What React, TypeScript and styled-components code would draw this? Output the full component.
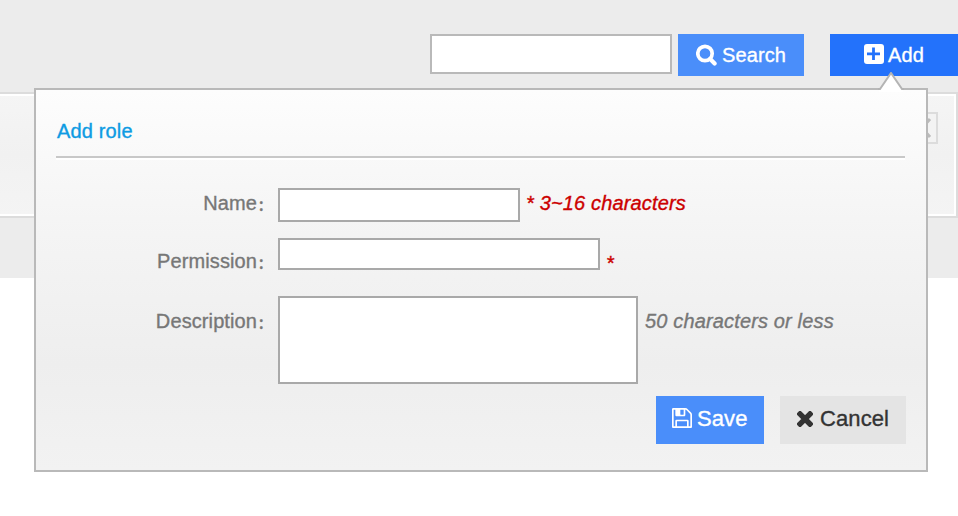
import React from 'react';
import styled, { createGlobalStyle } from 'styled-components';

const GlobalStyle = createGlobalStyle`
  * { box-sizing: border-box; }
  body {
    margin: 0;
    background: #fff;
    overflow: hidden;
    font-family: "Liberation Sans", Arial, "Noto Sans CJK SC", sans-serif;
    font-size: 20px;
    line-height: 24px;
    color: #777;
    -webkit-text-stroke: 0.35px currentColor;
  }
`;

const Page = styled.div`
  position: relative;
  width: 958px;
  height: 516px;
  overflow: hidden;
`;

const Backdrop = styled.div`
  height: 278px;
  background: #ececec;
`;

const Toolbar = styled.div`
  display: flex;
  align-items: flex-start;
  height: 92px;
  padding: 34px 0 0 430px;
`;

const SearchInput = styled.input`
  width: 242px;
  height: 40px;
  padding: 0 6px;
  border: 2px solid #b9b9b9;
  border-radius: 0;
  background: #fff;
  outline: none;
`;

const Button = styled.button<{ $bg: string; $color?: string; $w: number; $h?: number; $size?: number; $gap?: number }>`
  display: flex;
  flex: none;
  align-items: flex-start;
  gap: ${p => p.$gap ?? 5}px;
  width: ${p => p.$w}px;
  height: ${p => p.$h ?? 42}px;
  border: 0;
  background: ${p => p.$bg};
  color: ${p => p.$color ?? '#fff'};
  font: ${p => p.$size ?? 20}px/24px "Liberation Sans", Arial, sans-serif;
  letter-spacing: 0.1px;
`;

const SearchButton = styled(Button)`
  margin-left: 6px;
  padding: 9px 0 0 18px;
`;

const AddButton = styled(Button)`
  margin-left: 26px;
  padding: 9px 0 0 34px;
`;

const SaveButton = styled(Button)`
  padding: 11px 0 0 16px;
`;

const CancelButton = styled(Button)`
  padding: 11px 0 0 17px;
`;

const Icon = styled.svg<{ $top?: number }>`
  display: block;
  flex: none;
  margin-top: ${p => p.$top ?? 0}px;
`;

const FilterPanel = styled.div`
  display: flex;
  justify-content: flex-end;
  height: 126px;
  border: 2px solid #dcdcdc;
  border-left: 0;
  background: linear-gradient(#f5f5f5, #f1f1f1 50%, #f4f4f4);
  box-shadow: inset 0 2px #fff, inset 0 -2px #fff, inset -2px 0 #fff;
  padding: 18px 18px 0 0;
`;

const CloseButton = styled.div`
  display: flex;
  align-items: center;
  justify-content: center;
  width: 32px;
  height: 32px;
  border: 2px solid #dcdcdc;
  background: #f3f3f3;
`;

const Popup = styled.section`
  position: absolute;
  left: 34px;
  top: 88px;
  width: 894px;
  height: 384px;
  padding: 29px 20px 0;
  border: 2px solid #b9b9b9;
  background: linear-gradient(#fdfdfd, #f4f4f4 38%, #eeeeee 72%, #f2f2f2);
`;

const Arrow = styled.svg`
  position: absolute;
  left: 841px;
  top: -18px;
`;

const Title = styled.div`
  height: 39px;
  margin-right: 1px;
  border-bottom: 2px solid #c8c8c8;
  box-shadow: 0 2px #fff;
  color: #0d9be3;
  padding-left: 1px;
  letter-spacing: 0.15px;
`;

const Form = styled.div`
  padding-top: 30px;
`;

const Row = styled.div<{ $gap: number }>`
  display: flex;
  align-items: flex-start;
  margin-bottom: ${p => p.$gap}px;
`;

const Label = styled.label<{ $top: number }>`
  display: flex;
  justify-content: flex-end;
  align-items: baseline;
  width: 222px;
  height: 24px;
  margin-top: ${p => p.$top}px;
  letter-spacing: 0.1px;
`;

const Colon = styled.span`
  width: 21px;
  padding-left: 1px;
  font-family: "Noto Sans CJK SC", sans-serif;
  font-size: 13px;
  font-weight: 700;
  line-height: 20px;
`;

const Field = styled.input<{ $w: number; $h: number }>`
  flex: none;
  width: ${p => p.$w}px;
  height: ${p => p.$h}px;
  padding: 0 6px;
  border: 2px solid #a9a9a9;
  border-radius: 0;
  background: #fff;
  outline: none;
`;

const TextBox = styled.textarea`
  flex: none;
  width: 360px;
  height: 88px;
  padding: 4px 6px;
  border: 2px solid #a9a9a9;
  border-radius: 0;
  background: #fff;
  outline: none;
  resize: none;
`;

const Hint = styled.em<{ $top: number; $error?: boolean }>`
  margin: ${p => p.$top}px 0 0 ${p => (p.$error ? 6 : 7)}px;
  color: ${p => (p.$error ? '#cc0000' : '#777')};
  letter-spacing: 0.15px;
  white-space: nowrap;
`;

const Actions = styled.div`
  display: flex;
  justify-content: flex-end;
  gap: 16px;
`;

export default function App() {
  return (
    <Page>
      <GlobalStyle />
      <Backdrop>
        <Toolbar>
          <SearchInput aria-label="Search" />
          <SearchButton $bg="#4a8efa" $w={126}>
            <Icon $top={1} width="21" height="22" viewBox="0 0 21 22" fill="none" stroke="currentColor">
              <circle cx="9" cy="9.5" r="7.2" strokeWidth="3.7" />
              <path d="M14.2 15l4.4 4.4" strokeWidth="4.2" strokeLinecap="round" />
            </Icon>
            Search
          </SearchButton>
          <AddButton $bg="#2372fb" $w={128} $gap={4}>
            <Icon $top={1} width="20" height="20" viewBox="0 0 20 20">
              <rect width="20" height="20" rx="3" fill="#fff" />
              <path d="M9.5 3.5v12.5M3 9.8h13" stroke="#2372fb" strokeWidth="2.8" />
            </Icon>
            Add
          </AddButton>
        </Toolbar>
        <FilterPanel>
          <CloseButton>
            <svg width="20" height="22" viewBox="0 0 20 22">
              <path d="M2 2l16 18M18 2L2 20" stroke="#bbb" strokeWidth="3" />
            </svg>
          </CloseButton>
        </FilterPanel>
      </Backdrop>
      <Popup>
        <Arrow width="28" height="20" viewBox="0 0 28 20">
          <path d="M2 18L14 1L26 18V20H2Z" fill="#fff" />
          <path d="M1 17L3 17L14 1L25 17L27 17" fill="none" stroke="#b4b4b4" strokeWidth="2" />
        </Arrow>
        <Title>Add role</Title>
        <Form>
          <Row $gap={16}>
            <Label $top={3}>Name<Colon>：</Colon></Label>
            <Field $w={242} $h={34} />
            <Hint $top={3} $error>* 3~16 characters</Hint>
          </Row>
          <Row $gap={21}>
            <Label $top={11}>Permission<Colon>：</Colon></Label>
            <Field $w={322} $h={32} />
            <Hint $top={13} $error>*</Hint>
          </Row>
          <Row $gap={12}>
            <Label $top={13}>Description<Colon>：</Colon></Label>
            <TextBox />
            <Hint $top={13}>50 characters or less</Hint>
          </Row>
        </Form>
        <Actions>
          <SaveButton $bg="#4a8efa" $w={108} $h={48} $size={22}>
            <Icon $top={1} width="20" height="20" viewBox="128 128 1536 1536" fill="currentColor">
              <path d="M512 1536h768v-384h-768v384zm896 0h128v-896q0-14-10-38.5t-20-34.5l-281-281q-10-10-34-20t-39-10v416q0 40-28 68t-68 28h-576q-40 0-68-28t-28-68v-416h-128v1280h128v-416q0-40 28-68t68-28h832q40 0 68 28t28 68v416zm-384-928v-320q0-13-9.5-22.5t-22.5-9.5h-192q-13 0-22.5 9.5t-9.5 22.5v320q0 13 9.5 22.5t22.5 9.5h192q13 0 22.5-9.5t9.5-22.5zm640 32v928q0 40-28 68t-68 28h-1344q-40 0-68-28t-28-68v-1344q0-40 28-68t68-28h928q40 0 88 20t76 48l280 280q28 28 48 76t20 88z" />
            </Icon>
            Save
          </SaveButton>
          <CancelButton $bg="#e4e4e4" $color="#333" $w={126} $h={48} $size={22} $gap={7}>
            <Icon $top={4} width="16" height="16" viewBox="0 0 16 16">
              <path d="M3 3l10 10M13 3L3 13" stroke="currentColor" strokeWidth="5.4" strokeLinecap="square" />
            </Icon>
            Cancel
          </CancelButton>
        </Actions>
      </Popup>
    </Page>
  );
}
